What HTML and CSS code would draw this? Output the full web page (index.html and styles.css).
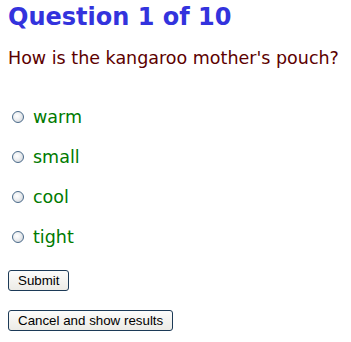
FILE: index.html
```html
<!DOCTYPE html>
<html>
<head>
<meta charset="utf-8">
<link rel="stylesheet" href="styles.css">
</head>
<body>
<div class="quiz">
  <h1 class="title">Question 1 of 10</h1>
  <p class="question">How is the kangaroo mother's pouch?</p>
  <div class="options">
    <label class="option"><span class="radio"></span><span class="opt-text">warm</span></label>
    <label class="option"><span class="radio"></span><span class="opt-text">small</span></label>
    <label class="option"><span class="radio"></span><span class="opt-text">cool</span></label>
    <label class="option"><span class="radio"></span><span class="opt-text">tight</span></label>
  </div>
  <div class="buttons">
    <button class="btn">Submit</button>
    <button class="btn">Cancel and show results</button>
  </div>
</div>
</body>
</html>
```
FILE: styles.css
```css
html, body {
  margin: 0;
  padding: 0;
  background: #ffffff;
}
.quiz {
  padding: 0 8px;
  font-family: "DejaVu Sans", Verdana, sans-serif;
}
.title {
  margin: 0;
  padding-top: 3px;
  font-size: 24px;
  line-height: 29px;
  font-weight: bold;
  color: #3333dd;
}
.question {
  margin: 16px 0 0 0;
  font-size: 17.5px;
  line-height: 20px;
  color: #5c0000;
}
.options {
  display: flex;
  flex-direction: column;
  gap: 20px;
  margin-top: 39px;
}
.option {
  display: flex;
  align-items: center;
  gap: 9px;
  height: 20px;
  padding-left: 4px;
}
.radio {
  width: 10px;
  height: 10px;
  border-radius: 50%;
  border: 1px solid #4a6a8a;
  background: radial-gradient(circle at 40% 40%, #ffffff 0%, #eef0f2 40%, #c8ccd2 100%);
  box-sizing: content-box;
}
.opt-text {
  font-size: 17.5px;
  line-height: 20px;
  color: #007a00;
}
.buttons {
  display: flex;
  flex-direction: column;
  align-items: flex-start;
  gap: 19px;
  margin-top: 23px;
}
.btn {
  font-family: "Liberation Sans", Arial, sans-serif;
  font-size: 13.33px;
  line-height: 15px;
  padding: 2px 9px 2px 9px;
  height: 21px;
  border: 1px solid #1c3a57;
  border-radius: 3px;
  background: linear-gradient(#fcfcfb, #ecebe6);
  color: #000;
}
```
